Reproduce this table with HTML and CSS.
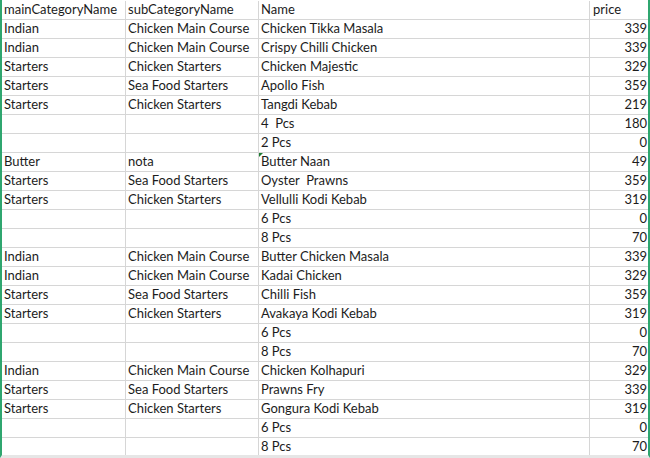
FILE: index.html
```html
<!DOCTYPE html>
<html>
<head>
<meta charset="utf-8">
<link rel="stylesheet" href="styles.css">
</head>
<body>
<div class="sheet">
  <div class="row head"><div class="c c1">mainCategoryName</div><div class="c c2">subCategoryName</div><div class="c c3">Name</div><div class="c c4 lt">price</div></div>
  <div class="row"><div class="c c1">Indian</div><div class="c c2">Chicken Main Course</div><div class="c c3">Chicken Tikka Masala</div><div class="c c4">339</div></div>
  <div class="row"><div class="c c1">Indian</div><div class="c c2">Chicken Main Course</div><div class="c c3">Crispy Chilli Chicken</div><div class="c c4">339</div></div>
  <div class="row"><div class="c c1">Starters</div><div class="c c2">Chicken Starters</div><div class="c c3">Chicken Majestic</div><div class="c c4">329</div></div>
  <div class="row"><div class="c c1">Starters</div><div class="c c2">Sea Food Starters</div><div class="c c3">Apollo Fish</div><div class="c c4">359</div></div>
  <div class="row"><div class="c c1">Starters</div><div class="c c2">Chicken Starters</div><div class="c c3">Tangdi Kebab</div><div class="c c4">219</div></div>
  <div class="row"><div class="c c1"></div><div class="c c2"></div><div class="c c3">4&nbsp; Pcs</div><div class="c c4">180</div></div>
  <div class="row"><div class="c c1"></div><div class="c c2"></div><div class="c c3">2 Pcs</div><div class="c c4">0</div></div>
  <div class="row"><div class="c c1">Butter</div><div class="c c2">nota</div><div class="c c3 flag">Butter Naan</div><div class="c c4">49</div></div>
  <div class="row"><div class="c c1">Starters</div><div class="c c2">Sea Food Starters</div><div class="c c3">Oyster&nbsp; Prawns</div><div class="c c4">359</div></div>
  <div class="row"><div class="c c1">Starters</div><div class="c c2">Chicken Starters</div><div class="c c3">Vellulli Kodi Kebab</div><div class="c c4">319</div></div>
  <div class="row"><div class="c c1"></div><div class="c c2"></div><div class="c c3">6 Pcs</div><div class="c c4">0</div></div>
  <div class="row"><div class="c c1"></div><div class="c c2"></div><div class="c c3">8 Pcs</div><div class="c c4">70</div></div>
  <div class="row"><div class="c c1">Indian</div><div class="c c2">Chicken Main Course</div><div class="c c3">Butter Chicken Masala</div><div class="c c4">339</div></div>
  <div class="row"><div class="c c1">Indian</div><div class="c c2">Chicken Main Course</div><div class="c c3">Kadai Chicken</div><div class="c c4">329</div></div>
  <div class="row"><div class="c c1">Starters</div><div class="c c2">Sea Food Starters</div><div class="c c3">Chilli Fish</div><div class="c c4">359</div></div>
  <div class="row"><div class="c c1">Starters</div><div class="c c2">Chicken Starters</div><div class="c c3">Avakaya Kodi Kebab</div><div class="c c4">319</div></div>
  <div class="row"><div class="c c1"></div><div class="c c2"></div><div class="c c3">6 Pcs</div><div class="c c4">0</div></div>
  <div class="row"><div class="c c1"></div><div class="c c2"></div><div class="c c3">8 Pcs</div><div class="c c4">70</div></div>
  <div class="row"><div class="c c1">Indian</div><div class="c c2">Chicken Main Course</div><div class="c c3">Chicken Kolhapuri</div><div class="c c4">329</div></div>
  <div class="row"><div class="c c1">Starters</div><div class="c c2">Sea Food Starters</div><div class="c c3">Prawns Fry</div><div class="c c4">339</div></div>
  <div class="row"><div class="c c1">Starters</div><div class="c c2">Chicken Starters</div><div class="c c3">Gongura Kodi Kebab</div><div class="c c4">319</div></div>
  <div class="row"><div class="c c1"></div><div class="c c2"></div><div class="c c3">6 Pcs</div><div class="c c4">0</div></div>
  <div class="row"><div class="c c1"></div><div class="c c2"></div><div class="c c3">8 Pcs</div><div class="c c4">70</div></div>
</div>
</body>
</html>
```
FILE: styles.css
```css
html, body {
  margin: 0;
  padding: 0;
  background: #ffffff;
}
.sheet {
  width: 650px;
  height: 458px;
  box-sizing: border-box;
  border-left: 2px solid #2fa66f;
  border-right: 2px solid #2fa66f;
  padding-top: 1px;
  overflow: hidden;
  font-family: Lato, "Open Sans", sans-serif;
  font-size: 13px;
  color: #1c1c1c;
  border-bottom: 3px solid #e6e6e6;
}
.row {
  display: grid;
  grid-template-columns: 124px 133px 331px 58px;
  height: 19px;
}
.c {
  box-sizing: border-box;
  height: 19px;
  border-bottom: 1px solid #d6d6d6;
  border-right: 1px solid #d6d6d6;
  padding: 0 3px 2px 2px;
  display: flex;
  align-items: flex-end;
  white-space: nowrap;
  overflow: hidden;
  line-height: 15px;
  position: relative;
}
.c4 {
  border-right: none;
  justify-content: flex-end;
  padding-right: 1px;
}
.c4.lt {
  justify-content: flex-start;
  padding-left: 3px;
}
.flag::before {
  content: "";
  position: absolute;
  left: 0;
  top: 0;
  width: 0;
  height: 0;
  border-top: 4px solid #1e7b34;
  border-right: 4px solid transparent;
}
```
